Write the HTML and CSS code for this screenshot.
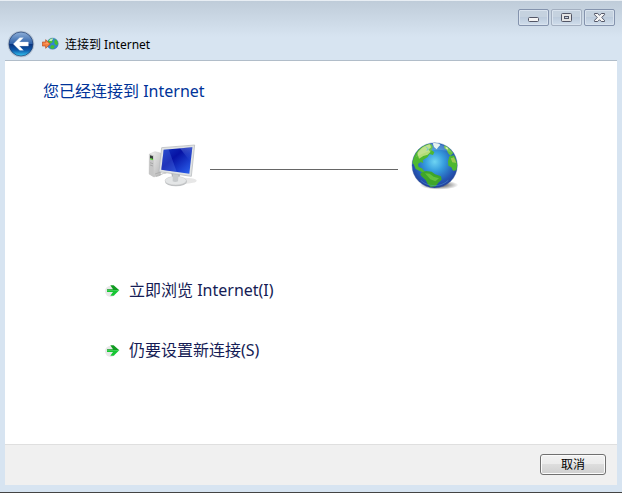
FILE: index.html
```html
<!DOCTYPE html>
<html lang="zh-CN">
  <head>
    <meta charset="UTF-8" />
    <meta name="viewport" content="width=device-width, initial-scale=1.0" />
    <title>连接到 Internet</title>
    <link rel="stylesheet" href="styles.css">
  </head>
  <body>
    <div class="window">
      <header class="titlebar">
        <div class="controls">
          <button class="control" type="button" aria-label="最小化">
            <svg width="13" height="11" viewBox="0 0 13 11">
              <rect x="1.5" y="5.5" width="10" height="4" rx="1" fill="#f4f4f4" stroke="#535666" />
            </svg>
          </button>
          <button class="control disabled" type="button" aria-label="最大化">
            <svg width="13" height="11" viewBox="0 0 13 11">
              <rect x="1.5" y="1.5" width="10" height="8" rx="1" fill="#e4e4e4" stroke="#535666" />
              <rect x="4.5" y="4.5" width="4" height="2" fill="#c4d0dd" stroke="#535666" />
            </svg>
          </button>
          <button class="control" type="button" aria-label="关闭">
            <svg width="13" height="11" viewBox="0 0 13 11">
              <path d="M1.5 1.5h3.2l1.8 1.8 1.8-1.8h3.2v1.2L8.7 5.5l2.8 2.8v1.2H8.3L6.5 7.7 4.7 9.5H1.5V8.3l2.8-2.8-2.8-2.8z" fill="#f6f6f6" stroke="#535666" />
            </svg>
          </button>
        </div>
        <div class="caption">
          <button class="back" type="button" aria-label="后退">
            <svg width="28" height="28" viewBox="0 0 84 84">
              <defs>
                <linearGradient id="back-fill" x1="0" y1="0" x2="0" y2="1">
                  <stop offset="0" stop-color="#8fb0d8" />
                  <stop offset="0.48" stop-color="#2f62aa" />
                  <stop offset="0.52" stop-color="#0a3580" />
                  <stop offset="0.75" stop-color="#0c57a8" />
                  <stop offset="1" stop-color="#35c8f4" />
                </linearGradient>
              </defs>
              <circle cx="42" cy="42" r="40" fill="#b4c2d2" />
              <circle cx="42" cy="42" r="36" fill="url(#back-fill)" stroke="#1c3a6c" stroke-width="2" />
              <path d="M19 42 38 23h11L37 36h27v12H37l12 13H38z" fill="#fff" stroke="#d8e4f2" stroke-width="1" />
            </svg>
          </button>
          <svg class="caption-icon" width="17" height="16" viewBox="0 0 51 48">
            <circle cx="32" cy="23" r="17" fill="#3186cf" stroke="#3a6a9c" stroke-width="1" />
            <path d="M18 17c3-7 9-10 14-10l-3 6 4 3-5 6-7-1zM38 9c6 3 10 8 10 14l-5 6-6-8zM29 27l9 2-2 8-7 2-5-5z" fill="#45c02f" />
            <path d="M21 14c3-5 8-7 13-6l-6 8z" fill="#c7efb8" />
            <path d="M1 18h10v-7l14 13-14 13v-7H1z" fill="#f58142" stroke="#b5481b" stroke-width="2" />
            <path d="M5 21h9v-3l6 6z" fill="#ffb07a" />
          </svg>
          <span>连接到 Internet</span>
        </div>
      </header>

      <main class="content">
        <h1>您已经连接到 Internet</h1>
        <div class="diagram">
          <svg width="50" height="50" viewBox="24 18 150 150">
            <defs>
              <linearGradient id="screen" x1="0" y1="0" x2="1" y2="1">
                <stop offset="0" stop-color="#1438c4" />
                <stop offset="0.4" stop-color="#0612a4" />
                <stop offset="1" stop-color="#2e68f4" />
              </linearGradient>
              <linearGradient id="glare" x1="0" y1="0" x2="0" y2="1">
                <stop offset="0" stop-color="#8fb0fa" />
                <stop offset="1" stop-color="#3a62e6" stop-opacity="0" />
              </linearGradient>
              <linearGradient id="metal" x1="0" y1="0" x2="1" y2="1">
                <stop offset="0" stop-color="#f4f4f4" />
                <stop offset="1" stop-color="#b6b6b6" />
              </linearGradient>
            </defs>
            <ellipse cx="132" cy="137" rx="38" ry="9" fill="#e7e7e7" />
            <path d="m28 57 17-7 17 4v66l-20 6-15-9z" fill="url(#metal)" stroke="#b8b8b8" stroke-width="1" />
            <path d="m28 57 13 4v65l-14-9z" fill="#c6c6c6" />
            <path d="m30 61 9 3v9l-9-3z" fill="#383c3c" />
            <path d="m30 69 9 3v4l-9-3z" fill="#58d831" />
            <path d="m30 83 9 3m-9 4 9 3" stroke="#999" stroke-width="2" />
            <path d="M48 124c12 0 18-11 31-10M45 117l26-9" fill="none" stroke="#a5a5a5" stroke-width="2" />
            <path d="m94 114 26 4-3 18H98z" fill="#a9adb0" />
            <ellipse cx="108" cy="140" rx="33" ry="14" fill="#bfc2c4" />
            <ellipse cx="107" cy="137" rx="32" ry="13" fill="#e4e6e7" stroke="#bbb" stroke-width="1" />
            <path d="m98 114 18 3-2 22q-8 4-16 0z" fill="#c7cacc" />
            <path d="m65 38 99-8-10 94-97-14z" fill="#dfe2e4" stroke="#b1b4b6" stroke-width="2" />
            <path d="m71 44 86-7-9 79-84-12z" fill="url(#screen)" />
            <path d="m71 44 15-1 24 67-46-6z" fill="#5c83ee" opacity="0.3" />
            <path d="m120 40 37-3-5 44z" fill="url(#glare)" opacity="0.4" />
          </svg>
          <div class="link-line"></div>
          <svg width="50" height="50" viewBox="30 30 150 150">
            <defs>
              <radialGradient id="ocean" cx="0.5" cy="0.42" r="0.6">
                <stop offset="0" stop-color="#6ed4f2" />
                <stop offset="0.35" stop-color="#369dde" />
                <stop offset="0.75" stop-color="#2457b4" />
                <stop offset="1" stop-color="#233b94" />
              </radialGradient>
              <radialGradient id="shadow">
                <stop offset="0.3" stop-color="#777" />
                <stop offset="1" stop-color="#fff" />
              </radialGradient>
              <clipPath id="globe"><circle cx="104" cy="103" r="67" /></clipPath>
            </defs>
            <ellipse cx="117" cy="162" rx="58" ry="14" fill="url(#shadow)" />
            <circle cx="104" cy="103" r="68" fill="url(#ocean)" stroke="#53749e" stroke-width="1" />
            <g clip-path="url(#globe)">
              <path d="M34 94c-1-28 16-50 44-56l16 2 5 8-5 8 9 8-4 8-10-3-7 10-14 9 2 8-8-3-8 6 2 9 10 4 9 11-8 1-20-10-6-14z" fill="#4fb82f" />
              <path d="M52 66c10-16 24-24 38-26l3 9-8 7 7 6-9 9-13 4-13 8z" fill="#b4dc78" />
              <path d="m78 47 6 6-3 6" fill="none" stroke="#4cb5dc" stroke-width="3" />
              <path d="m98 36 16-1 7 7-6 6-5 7-8-7z" fill="#e3f1ed" />
              <path d="m132 40 14 8 14 18-9 8-7-8-4-10-7-4z" fill="#64c03c" />
              <path d="m137 46 8 5-2 5-6-3z" fill="#c9ec98" />
              <path d="m148 76 14-3 12 27-4 18-11 1-5-10-9-5-1-13z" fill="#4db82f" />
              <path d="m152 82 10-3 7 17-12-2z" fill="#9cca52" />
              <path d="m63 125 15-5 17 2 10 8 18 6 2 10-10 9-8 11-15 2-9-9-6-12-11-10-5-6z" fill="#3fa629" />
              <path d="m75 127 14 1 12 9 16 5-11 9-15-6z" fill="#63c13e" />
            </g>
            <path d="M47 79a62 62 0 0 1 110-13q-48-25-110 13" fill="#fff" opacity="0.16" />
            <path d="M62 148a62 62 0 0 0 83 0" fill="none" stroke="#5eb6ef" stroke-width="3" opacity="0.35" />
          </svg>
        </div>
        <nav class="actions">
          <a href="#browse">
            <svg width="16" height="16" viewBox="0 0 48 48">
              <circle cx="17" cy="28" r="17" fill="#e8e8e8" />
              <path d="M6 22h18l-8-12h10l17 15H6z" fill="#119c22" />
              <path d="M6 25h37L26 41H16l8-11H6z" fill="#16c733" />
            </svg>
            <span>立即浏览 Internet(I)</span>
          </a>
          <a href="#setup">
            <svg width="16" height="16" viewBox="0 0 48 48">
              <circle cx="17" cy="28" r="17" fill="#e8e8e8" />
              <path d="M6 22h18l-8-12h10l17 15H6z" fill="#119c22" />
              <path d="M6 25h37L26 41H16l8-11H6z" fill="#16c733" />
            </svg>
            <span>仍要设置新连接(S)</span>
          </a>
        </nav>
      </main>

      <footer class="footer">
        <button class="cancel" type="button">取消</button>
      </footer>
    </div>
  </body>
</html>
```

FILE: styles.css
```css
* {
  box-sizing: border-box;
}

html,
body {
  margin: 0;
  padding: 0;
}

body,
button {
  font-family: "Noto Sans", "Noto Sans CJK SC", sans-serif;
  font-size: 12px;
  color: #000;
}

svg {
  display: block;
  flex: none;
}

.window {
  display: flex;
  flex-direction: column;
  min-height: 100vh;
  padding: 0 5px 7px;
  background: #d7e4f1;
  border-top: 1px solid #e8eef4;
  border-bottom: 1px solid #444;
}

/* title bar */
.titlebar {
  margin: 0 -5px;
  padding: 8px 7px 0;
  background: linear-gradient(#bfccd9, #d7e4f1 36px);
}

.controls {
  display: flex;
  justify-content: flex-end;
  gap: 2px;
}

.control {
  display: flex;
  align-items: center;
  justify-content: center;
  width: 31px;
  height: 17px;
  padding: 0;
  background: linear-gradient(#c5d2df 50%, #bccbdc 50%, #d0deec);
  border: 1px solid #8493ad;
  border-radius: 2px;
  box-shadow: inset 0 0 0 1px #d9e3ee;
}

.control.disabled {
  border-color: #a3afc0;
}

.caption {
  display: flex;
  align-items: center;
  height: 32px;
  margin-top: 2px;
}

.back {
  margin-right: 7px;
  padding: 0;
  background: none;
  border: 0;
}

.caption-icon {
  margin-right: 6px;
}

/* page */
.content {
  flex: 1;
  padding: 18px 38px;
  background: #fff;
  border-top: 1px solid #b1bdc9;
}

h1 {
  margin: 0;
  font-size: 16px;
  font-weight: 400;
  line-height: 24px;
  color: #003399;
}

.diagram {
  display: flex;
  align-items: center;
  gap: 12px;
  width: 58%;
  min-width: 312px;
  margin: 38px 0 0 105px;
}

.link-line {
  flex: 1;
  height: 1px;
  margin-top: 7px;
  background: #666;
}

.actions {
  display: flex;
  flex-direction: column;
  align-items: flex-start;
  gap: 36px;
  margin: 87px 0 0 62px;
}

.actions a {
  display: flex;
  align-items: center;
  gap: 8px;
  font-size: 16px;
  line-height: 24px;
  color: #151c55;
  text-decoration: none;
}

/* bottom bar */
.footer {
  display: flex;
  justify-content: flex-end;
  padding: 9px 11px 10px;
  background: #f0f0f0;
  border-top: 1px solid #dfdfdf;
}

.cancel {
  width: 66px;
  height: 21px;
  padding: 0;
  line-height: 18px;
  background: linear-gradient(#f2f2f2, #ebebeb 50%, #dddddd 50%, #cfcfcf);
  border: 1px solid #707070;
  border-radius: 3px;
  box-shadow: inset 0 0 0 1px #fbfbfb;
}
```
